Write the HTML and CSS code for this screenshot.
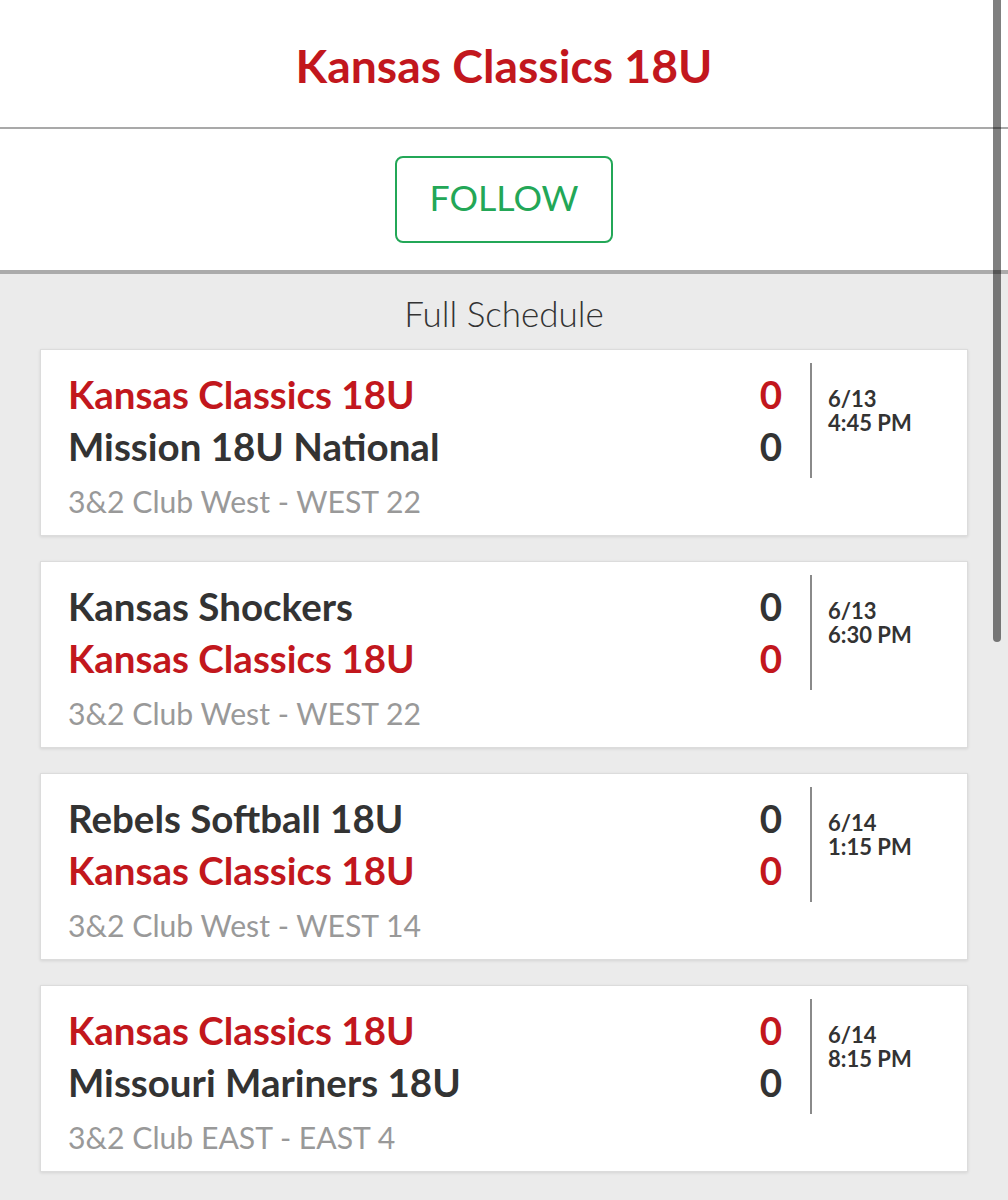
FILE: index.html
```html
<!DOCTYPE html>
<html lang="en">

<head>
    <meta charset="UTF-8">
    <meta name="viewport" content="width=device-width, initial-scale=1.0">
    <title>Kansas Classics 18U</title>
    <link rel="stylesheet" href="styles.css">
</head>

<body>
    <div class="team-header">
        <h1>Kansas Classics 18U</h1>
    </div>

    <div class="follow-bar">
        <button class="follow-btn">FOLLOW</button>
    </div>

    <div class="schedule">
        <h2>Full Schedule</h2>

        <div class="game">
            <div class="teams">
                <div class="team-row mine"><span>Kansas Classics 18U</span><span class="score">0</span></div>
                <div class="team-row"><span>Mission 18U National</span><span class="score">0</span></div>
                <div class="venue">3&amp;2 Club West - WEST 22</div>
            </div>
            <div class="when">
                <div>6/13</div>
                <div>4:45 PM</div>
            </div>
        </div>

        <div class="game">
            <div class="teams">
                <div class="team-row"><span>Kansas Shockers</span><span class="score">0</span></div>
                <div class="team-row mine"><span>Kansas Classics 18U</span><span class="score">0</span></div>
                <div class="venue">3&amp;2 Club West - WEST 22</div>
            </div>
            <div class="when">
                <div>6/13</div>
                <div>6:30 PM</div>
            </div>
        </div>

        <div class="game">
            <div class="teams">
                <div class="team-row"><span>Rebels Softball 18U</span><span class="score">0</span></div>
                <div class="team-row mine"><span>Kansas Classics 18U</span><span class="score">0</span></div>
                <div class="venue">3&amp;2 Club West - WEST 14</div>
            </div>
            <div class="when">
                <div>6/14</div>
                <div>1:15 PM</div>
            </div>
        </div>

        <div class="game">
            <div class="teams">
                <div class="team-row mine"><span>Kansas Classics 18U</span><span class="score">0</span></div>
                <div class="team-row"><span>Missouri Mariners 18U</span><span class="score">0</span></div>
                <div class="venue">3&amp;2 Club EAST - EAST 4</div>
            </div>
            <div class="when">
                <div>6/14</div>
                <div>8:15 PM</div>
            </div>
        </div>
    </div>

    <div class="scroll-thumb"></div>
</body>

</html>
```

FILE: styles.css
```css
* {
    margin: 0;
    padding: 0;
    box-sizing: border-box;
}

body {
    font-family: Lato, "Open Sans", sans-serif;
    background-color: #ebebeb;
    color: #333;
    min-height: 100vh;
}

.team-header {
    background-color: #ffffff;
    height: 129px;
    border-bottom: 2px solid #a9a9a9;
    text-align: center;
}

.team-header h1 {
    color: #c2171d;
    font-size: 46.3px;
    font-weight: bold;
    line-height: 130px;
}

.follow-bar {
    background-color: #ffffff;
    height: 145px;
    border-bottom: 4px solid #ababab;
    padding-top: 27px;
    text-align: center;
}

.follow-btn {
    font-family: Lato, sans-serif;
    width: 218px;
    height: 87px;
    padding-bottom: 5px;
    background-color: #ffffff;
    color: #23a757;
    border: 2px solid #23a757;
    border-radius: 8px;
    font-size: 35.7px;
    cursor: pointer;
}

.schedule {
    padding: 0 40px 20px;
}

.schedule h2 {
    font-size: 35px;
    font-weight: 300;
    color: #333;
    text-align: center;
    line-height: 42px;
    padding: 18px 0 15px;
}

.game {
    display: flex;
    background-color: #ffffff;
    border: 1px solid #dcdcdc;
    box-shadow: 0 1px 3px rgba(0, 0, 0, 0.1);
    margin-bottom: 25px;
    padding: 18px 0 12px 27px;
}

.teams {
    flex: 1;
    padding-right: 28px;
}

.team-row {
    display: flex;
    justify-content: space-between;
    font-size: 38.5px;
    font-weight: bold;
    line-height: 52px;
    color: #333;
}

.team-row.mine {
    color: #c2171d;
}

.venue {
    font-size: 30.2px;
    line-height: 44px;
    margin-top: 7px;
    color: #999;
}

.when {
    align-self: flex-start;
    width: 157px;
    height: 115px;
    margin-top: -5px;
    border-left: 2px solid #8a8a8a;
    padding: 24px 0 0 16px;
    font-size: 22px;
    font-weight: bold;
    line-height: 24px;
    color: #333;
}

.scroll-thumb {
    position: fixed;
    top: 0;
    right: 7px;
    width: 8px;
    height: 642px;
    background-color: rgba(0, 0, 0, 0.5);
    border-radius: 0 0 4px 4px;
}
```
